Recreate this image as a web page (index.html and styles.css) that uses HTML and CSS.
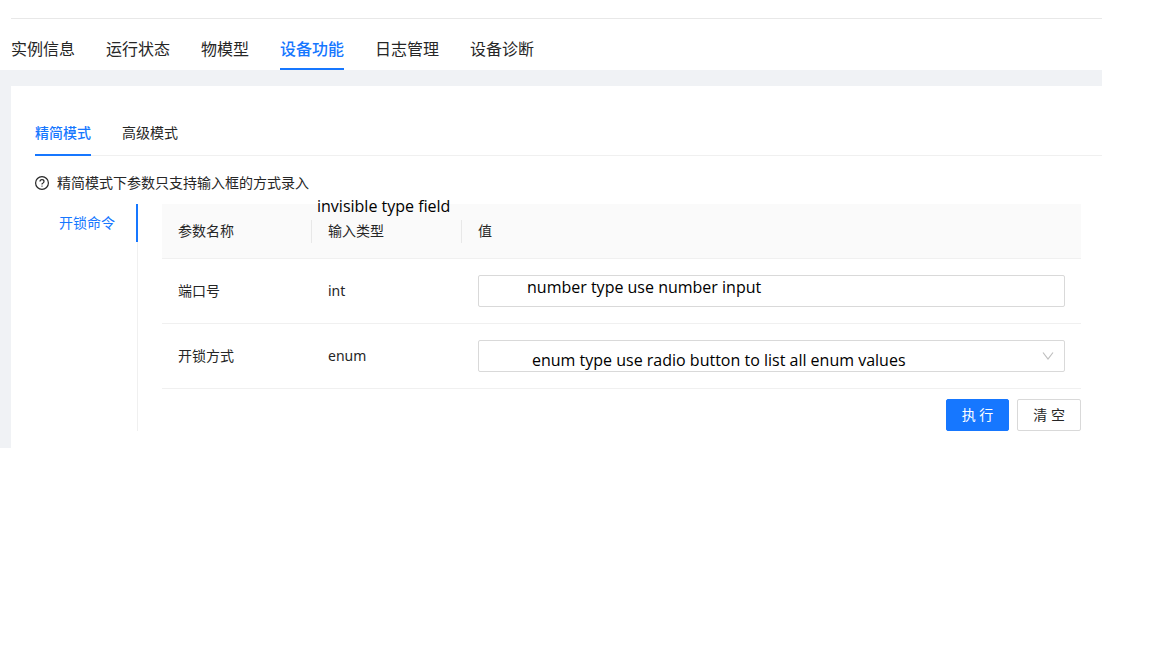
FILE: index.html
```html
<!DOCTYPE html>
<html lang="zh-CN">
<head>
<meta charset="utf-8">
<meta name="viewport" content="width=device-width, initial-scale=1">
<title>设备功能</title>
<link rel="stylesheet" href="styles.css">
</head>
<body>
<div class="page">
  <nav class="main-tabs">
    <a class="main-tab" href="#info">实例信息</a>
    <a class="main-tab" href="#status">运行状态</a>
    <a class="main-tab" href="#model">物模型</a>
    <a class="main-tab is-active" href="#function">设备功能</a>
    <a class="main-tab" href="#log">日志管理</a>
    <a class="main-tab" href="#diagnose">设备诊断</a>
  </nav>
  <main class="content">
    <section class="panel">
      <nav class="mode-tabs">
        <a class="mode-tab is-active" href="#simple">精简模式</a>
        <a class="mode-tab" href="#advanced">高级模式</a>
      </nav>
      <p class="hint">
        <svg class="hint-icon" viewBox="0 0 14 14" aria-hidden="true">
          <circle cx="7" cy="7" r="6.4"/>
          <path d="M5 5.6C5 4.4 5.9 3.7 7 3.7s2 .7 2 1.8c0 .9-.6 1.4-1.3 1.7-.5.2-.7.5-.7 1v.3"/>
          <circle class="hint-dot" cx="7" cy="10.1" r=".7"/>
        </svg>
        <span>精简模式下参数只支持输入框的方式录入</span>
      </p>
      <div class="workspace">
        <nav class="commands">
          <a class="command is-active" href="#unlock">开锁命令</a>
        </nav>
        <form class="params">
          <table class="param-table">
            <thead>
              <tr>
                <th class="col-name">参数名称</th>
                <th class="col-type">输入类型<span class="note note-type">invisible type field</span></th>
                <th>值</th>
              </tr>
            </thead>
            <tbody>
              <tr>
                <td><label for="port">端口号</label></td>
                <td>int</td>
                <td>
                  <div class="field">
                    <input class="control" id="port" type="number">
                    <span class="note note-number">number type use number input</span>
                  </div>
                </td>
              </tr>
              <tr>
                <td><label for="unlock-mode">开锁方式</label></td>
                <td>enum</td>
                <td>
                  <div class="field">
                    <select class="control" id="unlock-mode"><option value=""></option></select>
                    <svg class="arrow" viewBox="0 0 12 12" aria-hidden="true"><path d="M1 2.5l5 6.5 5-6.5"/></svg>
                    <span class="note note-enum">enum type use radio button to list all enum values</span>
                  </div>
                </td>
              </tr>
            </tbody>
          </table>
          <div class="actions">
            <button class="btn btn-primary" type="button">执 行</button>
            <button class="btn" type="reset">清 空</button>
          </div>
        </form>
      </div>
    </section>
  </main>
</div>
</body>
</html>
```
FILE: styles.css
```css
* {
  box-sizing: border-box;
}

body {
  margin: 0;
  background: #fff;
  color: #262626;
  font: 14px/22px "Noto Sans", "Noto Sans CJK SC", sans-serif;
}

a {
  color: inherit;
  text-decoration: none;
}

.page {
  padding: 18px 50px 0 0;
}

.main-tabs {
  display: flex;
  gap: 31px;
  margin-left: 11px;
  border-top: 1px solid #e8e8e8;
  font-size: 16px;
  line-height: 24px;
}

.main-tab {
  padding: 18px 0 7px;
  border-bottom: 2px solid transparent;
}

.main-tab.is-active,
.mode-tab.is-active {
  border-color: #1677ff;
  color: #1677ff;
  font-weight: 500;
}

.content {
  padding: 16px 0 0 11px;
  background: #f0f2f5;
}

.panel {
  padding: 36px 0 17px 24px;
  background: #fff;
}

.mode-tabs {
  display: flex;
  gap: 31px;
  border-bottom: 1px solid #f0f0f0;
}

.mode-tab {
  margin-bottom: -1px;
  padding-bottom: 10px;
  border-bottom: 2px solid transparent;
}

.hint {
  display: flex;
  align-items: center;
  gap: 8px;
  margin: 16px 0 10px;
}

.hint-icon {
  width: 14px;
  height: 14px;
  fill: none;
  stroke: #262626;
  stroke-width: 1.2;
}

.hint-icon .hint-dot {
  fill: #262626;
  stroke: none;
}

.workspace {
  display: flex;
  margin-right: 21px;
}

.commands {
  flex: none;
  width: 103px;
  border-right: 1px solid #f0f0f0;
}

.command {
  display: block;
  margin-right: -1px;
  padding: 8px 22px 8px 24px;
  border-right: 2px solid transparent;
  white-space: nowrap;
}

.command.is-active {
  border-color: #1677ff;
  color: #1677ff;
}

.params {
  flex: 1;
  min-width: 0;
  padding-left: 24px;
}

.param-table {
  width: 100%;
  table-layout: fixed;
  border-collapse: separate;
  border-spacing: 0;
}

.param-table th,
.param-table td {
  padding: 16px;
  border-bottom: 1px solid #f0f0f0;
  text-align: left;
  font-weight: 400;
}

.param-table th {
  position: relative;
  background: #fafafa;
}

.col-name,
.col-type {
  width: 150px;
}

.col-name::after,
.col-type::after {
  content: "";
  position: absolute;
  top: 16px;
  right: 0;
  width: 1px;
  height: 23px;
  background: #e8e8e8;
}

.field {
  position: relative;
}

.control {
  display: block;
  width: 100%;
  height: 32px;
  padding: 4px 11px;
  border: 1px solid #d9d9d9;
  border-radius: 2px;
  background: #fff;
  color: inherit;
  font: inherit;
  appearance: none;
}

.arrow {
  position: absolute;
  top: 10px;
  right: 11px;
  width: 12px;
  height: 12px;
  fill: none;
  stroke: #bfbfbf;
  stroke-width: 1.2;
  pointer-events: none;
}

.note {
  position: absolute;
  color: #000;
  font-family: "Open Sans", "Noto Sans", sans-serif;
  font-size: 16px;
  line-height: 22px;
  white-space: nowrap;
  pointer-events: none;
}

.note-type {
  top: -9px;
  left: 5px;
}

.note-number {
  top: 1px;
  left: 49px;
}

.note-enum {
  top: 9px;
  left: 54px;
}

.actions {
  display: flex;
  justify-content: flex-end;
  gap: 8px;
  margin-top: 10px;
}

.btn {
  height: 32px;
  padding: 4px 15px;
  border: 1px solid #d9d9d9;
  border-radius: 2px;
  background: #fff;
  color: #262626;
  font: inherit;
}

.btn-primary {
  border-color: #1677ff;
  background: #1677ff;
  color: #fff;
}
```
